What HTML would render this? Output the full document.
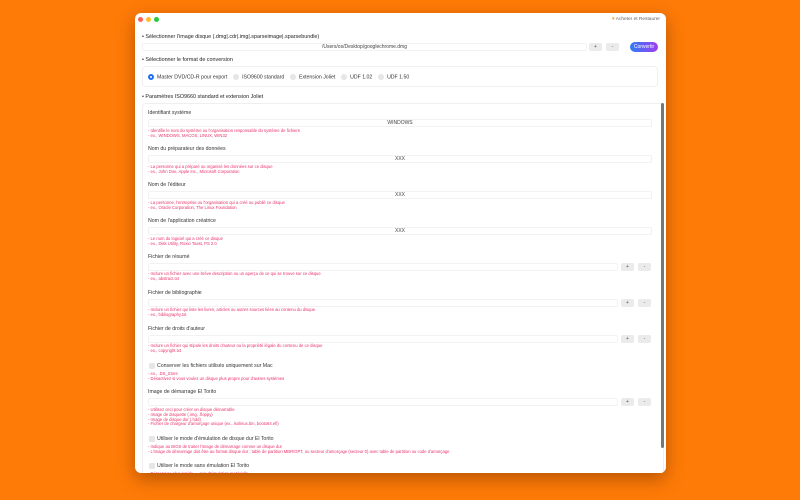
<!DOCTYPE html>
<html><head><meta charset="utf-8"><style>
*{margin:0;padding:0;box-sizing:border-box}
body{width:800px;height:500px;background:#ff7b07;font-family:"Liberation Sans",sans-serif;position:relative;overflow:hidden}
.win{position:absolute;left:135px;top:13px;width:531px;height:460px;background:#fff;border-radius:6px;box-shadow:0 6px 18px rgba(90,40,0,.45);overflow:hidden}
.in{position:absolute;left:0;top:2px;width:531px;height:460px}
.a{position:absolute;white-space:nowrap}
.t{font-size:5.2px;color:#333;line-height:6px}
.h{font-size:5.4px;color:#222;line-height:6px}
.r{font-size:4.2px;color:#e8336b;line-height:4.8px}
.f{position:absolute;border:0.5px solid #f2f2f2;background:#fff;border-radius:2px;font-size:5px;color:#444;text-align:center;line-height:7px}
.b{position:absolute;background:#ebebeb;border-radius:2px;font-size:5px;color:#555;text-align:center;line-height:8px;width:13px;height:8px}
.box{position:absolute;border:0.5px solid #efefef;border-radius:4px;background:#fff}
.rad{display:inline-block;width:6px;height:6px;border-radius:50%;background:#e6e6e6;vertical-align:middle;margin-right:3px}
.cb{position:absolute;width:6px;height:6px;border-radius:1.5px;background:#e6e6e6}
.dot{position:absolute;width:5px;height:5px;border-radius:50%;top:4px}
</style></head><body>
<div class="win">
<div class="dot" style="left:3px;background:#fe5f57"></div>
<div class="dot" style="left:11px;background:#febc2e"></div>
<div class="dot" style="left:19px;background:#28c840"></div>
<div class="in">
<div class="a" style="right:6px;top:2px;font-size:4.8px;color:#666"><span style="color:#f0a020">♥</span> Acheter et Restaurer</div>

<div class="a h" style="left:7px;top:19px">• Sélectionner l'image disque (.dmg|.cdr|.img|.sparseimage|.sparsebundle)</div>
<div class="f" style="left:7px;top:28px;width:445px;height:8px">/Users/os/Desktop/googlechrome.dmg</div>
<div class="b" style="left:454px;top:28px">+</div>
<div class="b" style="left:471px;top:28px">-</div>
<div class="a" style="left:495px;top:27px;width:28px;height:10px;border-radius:5px;background:linear-gradient(90deg,#2f7bf5,#a03ff0);color:#fff;font-size:5px;line-height:10px;text-align:center">Convertir</div>

<div class="a h" style="left:7px;top:42px">• Sélectionner le format de conversion</div>
<div class="box" style="left:7px;top:51px;width:516px;height:21px"></div>
<div class="a t" style="left:13px;top:59px"><span class="rad" style="background:#fff;border:2px solid #1f6ff0"></span>Master DVD/CD-R pour export &nbsp;&nbsp;&nbsp;<span class="rad"></span>ISO9600 standard &nbsp;&nbsp;&nbsp;<span class="rad"></span>Extension Joliet &nbsp;&nbsp;&nbsp;<span class="rad"></span>UDF 1.02 &nbsp;&nbsp;&nbsp;<span class="rad"></span>UDF 1.50</div>

<div class="a h" style="left:7px;top:79px">• Paramètres ISO9660 standard et extension Joliet</div>
<div class="box" style="left:7px;top:88px;width:522px;height:380px"></div>
<div class="a" style="left:526px;top:88px;width:3px;height:345px;background:#777;border-radius:2px"></div>

<div class="a t" style="left:13px;top:95px">Identifiant système</div>
<div class="f" style="left:13px;top:104px;width:504px;height:8px">WINDOWS</div>
<div class="a r" style="left:13px;top:114px">- Identifie le nom du système ou l'organisation responsable du système de fichiers<br>- ex., WINDOWS, MACOS, LINUX, WIN32</div>

<div class="a t" style="left:13px;top:131px">Nom du préparateur des données</div>
<div class="f" style="left:13px;top:140px;width:504px;height:8px">XXX</div>
<div class="a r" style="left:13px;top:150px">- La personne qui a préparé ou organisé les données sur ce disque<br>- ex., John Doe, Apple Inc., Microsoft Corporation</div>

<div class="a t" style="left:13px;top:167px">Nom de l'éditeur</div>
<div class="f" style="left:13px;top:176px;width:504px;height:8px">XXX</div>
<div class="a r" style="left:13px;top:186px">- La personne, l'entreprise ou l'organisation qui a créé ou publié ce disque<br>- ex., Oracle Corporation, The Linux Foundation</div>

<div class="a t" style="left:13px;top:203px">Nom de l'application créatrice</div>
<div class="f" style="left:13px;top:212px;width:504px;height:8px">XXX</div>
<div class="a r" style="left:13px;top:222px">- Le nom du logiciel qui a créé ce disque<br>- ex., Disk Utility, Roxio Toast, PS 2.0</div>

<div class="a t" style="left:13px;top:239px">Fichier de résumé</div>
<div class="f" style="left:13px;top:248px;width:470px;height:8px"></div>
<div class="b" style="left:486px;top:248px">+</div><div class="b" style="left:503px;top:248px">-</div>
<div class="a r" style="left:13px;top:257px">- Inclure un fichier avec une brève description ou un aperçu de ce qui se trouve sur ce disque<br>- ex., abstract.txt</div>

<div class="a t" style="left:13px;top:275px">Fichier de bibliographie</div>
<div class="f" style="left:13px;top:284px;width:470px;height:8px"></div>
<div class="b" style="left:486px;top:284px">+</div><div class="b" style="left:503px;top:284px">-</div>
<div class="a r" style="left:13px;top:293px">- Inclure un fichier qui liste les livres, articles ou autres sources liées au contenu du disque<br>- ex., bibliography.txt</div>

<div class="a t" style="left:13px;top:311px">Fichier de droits d'auteur</div>
<div class="f" style="left:13px;top:320px;width:470px;height:8px"></div>
<div class="b" style="left:486px;top:320px">+</div><div class="b" style="left:503px;top:320px">-</div>
<div class="a r" style="left:13px;top:329px">- Inclure un fichier qui stipule les droits d'auteur ou la propriété légale du contenu de ce disque<br>- ex., copyright.txt</div>

<div class="cb" style="left:14px;top:348px"></div>
<div class="a t" style="left:22px;top:348px">Conserver les fichiers utilisés uniquement sur Mac</div>
<div class="a r" style="left:13px;top:357px">- ex., .DS_Store<br>- Désactivez si vous voulez un disque plus propre pour d'autres systèmes</div>

<div class="a t" style="left:13px;top:374px">Image de démarrage El Torito</div>
<div class="f" style="left:13px;top:383px;width:470px;height:8px"></div>
<div class="b" style="left:486px;top:383px">+</div><div class="b" style="left:503px;top:383px">-</div>
<div class="a r" style="left:13px;top:393px">- Utilisez ceci pour créer un disque démarrable<br>- Image de disquette (.img, .floppy)<br>- Image de disque dur (.hdd)<br>- Fichier de chargeur d'amorçage unique (ex., isolinux.bin, bootx64.efi)</div>

<div class="cb" style="left:14px;top:421px"></div>
<div class="a t" style="left:22px;top:421px">Utiliser le mode d'émulation de disque dur El Torito</div>
<div class="a r" style="left:13px;top:430px">- Indique au BIOS de traiter l'image de démarrage comme un disque dur<br>- L'image de démarrage doit être au format disque dur : table de partition MBR/GPT, ou secteur d'amorçage (secteur 0) avec table de partition ou code d'amorçage</div>

<div class="cb" style="left:14px;top:448px"></div>
<div class="a t" style="left:22px;top:448px">Utiliser le mode sans émulation El Torito</div>
<div class="a r" style="left:13px;top:457px">- Démarrage plus rapide — pas d'émulation matérielle</div>
</div>
</div>
</body></html>
